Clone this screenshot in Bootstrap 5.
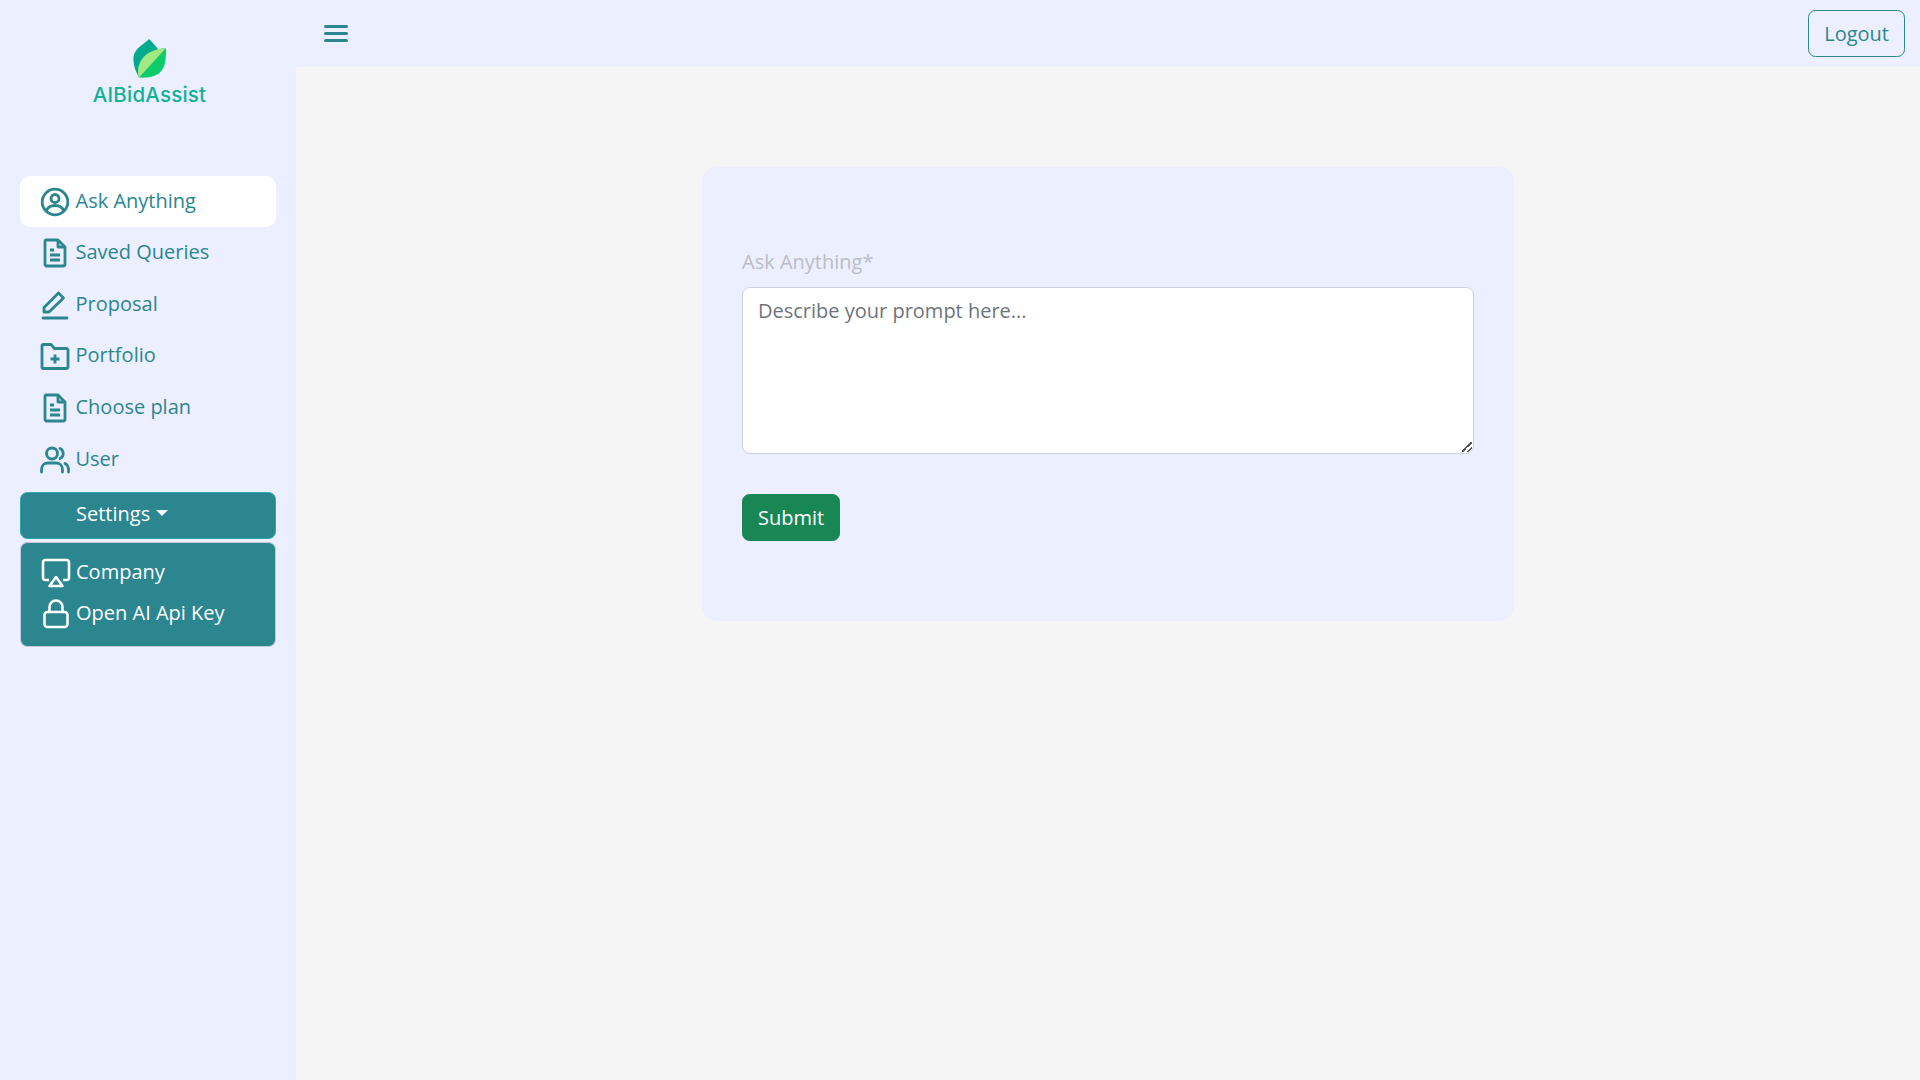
<!doctype html>
<html lang="en">
<head>
<meta charset="utf-8">
<title>AIBidAssist</title>
<link rel="stylesheet" href="https://cdn.jsdelivr.net/npm/bootstrap@5.3.0/dist/css/bootstrap.min.css">
<style>
html{font-size:20px}
body{font-family:"Open Sans","Liberation Sans",sans-serif;background:#f5f5f5;color:#2b8690;min-height:1080px;overflow:hidden}
.app-shell{min-height:1080px}
.side-panel{width:296px;flex:0 0 296px;background:#ebefff;padding:0 20px}
.brand-box{height:176px;padding-top:39px;margin-right:-3px}
.brand-name{font-family:Inter,"Liberation Sans",sans-serif;font-weight:500;font-size:20.5px;line-height:24px;color:#12b196;margin-top:5px;letter-spacing:.2px}
.side-link{display:flex;align-items:center;height:51.8px;padding-left:20px;color:#2b8690;text-decoration:none;border-radius:10px;line-height:30px}
.side-link.is-current{background:#fff;height:51px}
.side-link svg,.sub-link svg{flex:0 0 30px;margin-left:0}
.side-link svg{margin-right:5.5px}
.side-link span,.sub-link span{position:relative;top:-1px}
.settings-btn{display:block;width:100%;height:47px;margin-top:6px;text-align:left;padding:0 0 2px 55px;background:#2b8690;color:#fff;border:1px solid #2ba6b3;border-radius:7.5px}
.settings-btn:hover,.settings-btn:focus{background:#2b8690;color:#fff;border-color:#2ba6b3}
.settings-btn::after{margin-left:6px}
.sub-panel{margin:3px 0 0;height:105px;background:#2b8690;border:1px solid #c5ccd8;border-radius:7.5px;padding:10px 0 0 20px}
.sub-link{display:flex;align-items:center;height:41px;color:#fff;text-decoration:none;line-height:30px}
.sub-link svg{margin-right:5px}
.main-area{min-width:0}
.top-strip{height:67px;background:#ebefff;padding:0 15px 0 28px}
.menu-toggle{width:24px;height:17px;display:flex;flex-direction:column;justify-content:space-between;border:0;background:none;padding:0}
.menu-toggle i{display:block;height:3px;border-radius:2px;background:#2b8690}
.logout-btn{color:#2b8690;border:1px solid #2b8690;background:transparent}
.logout-btn:hover{color:#2b8690;border-color:#2b8690;background:transparent}
.ask-card{width:812px;margin:100px auto 0;background:#ebefff;border-radius:15px;padding:80px 40px 80px}
.ask-label{color:#bcbcc4;margin-bottom:10px}
.ask-input{height:167px;border-color:#ccd2dd}
.ask-input::placeholder{color:#6f747c}
.ask-input::-webkit-resizer{background:linear-gradient(135deg,transparent 43%,#555 43%,#555 55%,transparent 55%,transparent 71%,#555 71%,#555 83%,transparent 83%) right 1px bottom 1px/10px 10px no-repeat}
.submit-btn{margin-top:40px;background:#198754;border-color:#198754;color:#fff}
</style>
</head>
<body>
<div class="d-flex app-shell">
  <aside class="side-panel">
    <div class="brand-box d-flex flex-column align-items-center">
      <svg width="34" height="39" viewBox="0 0 34 39" aria-hidden="true">
        <path d="M16 0C12 5 2 8 .5 18c-.6 8 2 14 5.500 20L14 26 25 10C22 6 19 3 16 0z" fill="#03ab8e"/>
        <path d="M33 9C24 10 15 12 9 20 5 26 4 33 6 38.500c7 .5 15 0 21-5 6-6 6-15 6-24.500z" fill="#0ccc6c"/>
        <path d="M33 9C24 10 15 12 9 20 5 26 4 33 6 38.500z" fill="#a3e983"/>
      </svg>
      <div class="brand-name">AIBidAssist</div>
    </div>
    <nav>
      <a class="side-link is-current" href="#">
        <svg width="30" height="30" viewBox="0 0 30 30" fill="none" stroke="#2b8690" stroke-width="2.800" aria-hidden="true"><circle cx="15" cy="15" r="12.800"/><circle cx="15" cy="11.500" r="4"/><path d="M6.500 24c1-4 4-5.500 8.500-5.500s7.500 1.500 8.500 5.500"/></svg>
        <span>Ask Anything</span>
      </a>
      <a class="side-link" href="#">
        <svg width="30" height="30" viewBox="0 0 30 30" fill="none" stroke="#2b8690" stroke-width="2.800" stroke-linejoin="round" aria-hidden="true"><path d="M5 3.500a1.500 1.500 0 0 1 1.500-1.500H18l7 7v17.500a1.500 1.500 0 0 1-1.500 1.500h-17A1.500 1.500 0 0 1 5 26.500z"/><path d="M18 2v7h7M10 12h4M10 17h10M10 22h10"/></svg>
        <span>Saved Queries</span>
      </a>
      <a class="side-link" href="#">
        <svg width="30" height="30" viewBox="0 0 30 30" fill="none" stroke="#2b8690" stroke-width="2.800" stroke-linejoin="round" stroke-linecap="round" aria-hidden="true"><path d="M4 22v-4.500L18.500 3l5 5L9 22z"/><path d="M3 28h24"/></svg>
        <span>Proposal</span>
      </a>
      <a class="side-link" href="#">
        <svg width="30" height="30" viewBox="0 0 30 30" fill="none" stroke="#2b8690" stroke-width="2.800" stroke-linejoin="round" aria-hidden="true"><path d="M2 5a1.500 1.500 0 0 1 1.500-1.500H11l3.500 4h12A1.500 1.500 0 0 1 28 9v17a1.500 1.500 0 0 1-1.500 1.500h-23A1.500 1.500 0 0 1 2 26z"/><path d="M15 13.500v9M10.500 18h9"/></svg>
        <span>Portfolio</span>
      </a>
      <a class="side-link" href="#">
        <svg width="30" height="30" viewBox="0 0 30 30" fill="none" stroke="#2b8690" stroke-width="2.800" stroke-linejoin="round" aria-hidden="true"><path d="M5 3.500a1.500 1.500 0 0 1 1.500-1.500H18l7 7v17.500a1.500 1.500 0 0 1-1.500 1.500h-17A1.500 1.500 0 0 1 5 26.500z"/><path d="M18 2v7h7M10 12h4M10 17h10M10 22h10"/></svg>
        <span>Choose plan</span>
      </a>
      <a class="side-link" href="#">
        <svg width="30" height="30" viewBox="0 0 30 30" fill="none" stroke="#2b8690" stroke-width="2.800" stroke-linecap="round" aria-hidden="true"><circle cx="12" cy="8.500" r="5.500"/><path d="M1.500 27v-2.500c0-4 3-6.500 6.500-6.500h8c3.500 0 6.500 2.500 6.500 6.500V27"/><path d="M20 3.500a5.500 5.500 0 0 1 0 10M25 18.500c2 1 3.500 3.500 3.500 6V27"/></svg>
        <span>User</span>
      </a>
      <button class="settings-btn dropdown-toggle" type="button">Settings</button>
      <div class="sub-panel">
        <a class="sub-link" href="#">
          <svg width="30" height="30" viewBox="0 0 30 30" fill="none" stroke="#fff" stroke-width="2.600" stroke-linejoin="round" aria-hidden="true"><path d="M8 22H4.500A2.500 2.500 0 0 1 2 19.500v-15A2.500 2.500 0 0 1 4.500 2h21A2.500 2.500 0 0 1 28 4.500v15a2.500 2.500 0 0 1-2.500 2.500H22"/><path d="M15 19l6.500 9h-13z"/></svg>
          <span>Company</span>
        </a>
        <a class="sub-link" href="#">
          <svg width="30" height="30" viewBox="0 0 30 30" fill="none" stroke="#fff" stroke-width="2.600" stroke-linejoin="round" aria-hidden="true"><rect x="3.500" y="13" width="23" height="15" rx="3"/><path d="M8.500 13V8a6.500 6.500 0 0 1 13 0v5"/></svg>
          <span>Open AI Api Key</span>
        </a>
      </div>
    </nav>
  </aside>
  <div class="main-area flex-grow-1">
    <header class="top-strip d-flex align-items-center justify-content-between">
      <button class="menu-toggle" type="button" aria-label="Toggle menu"><i></i><i></i><i></i></button>
      <button class="btn logout-btn" type="button">Logout</button>
    </header>
    <main>
      <form class="ask-card">
        <label class="form-label ask-label d-block" for="prompt">Ask Anything*</label>
        <textarea id="prompt" class="form-control ask-input" placeholder="Describe your prompt here..."></textarea>
        <button class="btn submit-btn" type="button">Submit</button>
      </form>
    </main>
  </div>
</div>
<script src="https://cdn.jsdelivr.net/npm/bootstrap@5.3.0/dist/js/bootstrap.bundle.min.js"></script>
</body>
</html>
